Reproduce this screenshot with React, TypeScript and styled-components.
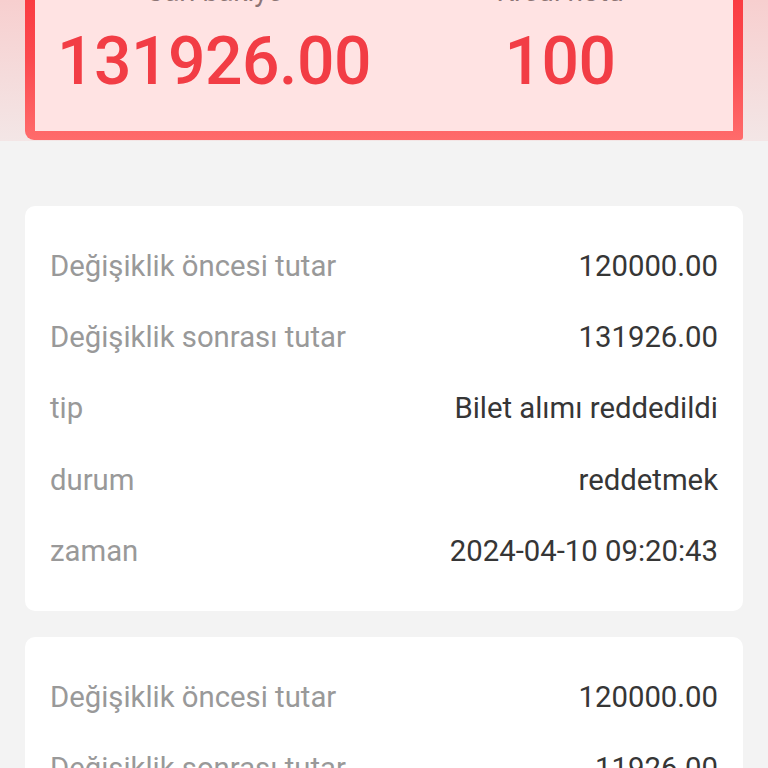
import React from "react"
import styled, { createGlobalStyle } from "styled-components"

const GlobalStyle = createGlobalStyle`
    * {
        box-sizing: border-box;
    }

    body {
        margin: 0;
        background: #f3f3f3;
        font-family: "Roboto", "Noto Sans", sans-serif;
        overflow: hidden;
    }
`

// the screenshot is taken scrolled down a little, this stands for the scroll offset
const Page = styled.div`
    margin-top: -78px;
    display: flex;
    flex-direction: column;
`

const Header = styled.header`
    padding: 20px 25px 1px;
    background: linear-gradient(180deg, #f9c2c2 0%, #f6d6d6 55%, #f3e6e6 100%);
`

const BalanceFrame = styled.div`
    padding: 10px 10px 9px;
    background: linear-gradient(180deg, #f92e35 0%, #fb4a4f 60%, #ff6b6b 100%);
    border-bottom-left-radius: 9px;
    border-bottom-right-radius: 3px;
`

const BalanceInner = styled.div`
    display: grid;
    grid-template-columns: 1fr 1fr;
    padding: 20px 0 29px 6px;
    background: #ffe3e3;
`

const BalanceCol = styled.div`
    display: flex;
    flex-direction: column;
    align-items: center;
`

const BalanceLabel = styled.span`
    font-size: 28px;
    line-height: 40px;
    color: #8d7575;
`

const BalanceValue = styled.span`
    margin-top: 10px;
    font-size: 66px;
    line-height: 80px;
    font-weight: 500;
    color: #f23d45;
    letter-spacing: -0.5px;
`

const List = styled.main`
    display: flex;
    flex-direction: column;
    gap: 26px;
    padding: 65px 25px 40px;
`

const Card = styled.section`
    display: flex;
    flex-direction: column;
    padding: 24px 25px 25px;
    background: #ffffff;
    border-radius: 10px;
`

const Row = styled.div`
    display: flex;
    align-items: center;
    justify-content: space-between;
    height: 71.3px;
    font-size: 29.3px;
`

const Label = styled.span`
    color: #999999;
`

const Value = styled.span`
    color: #363636;
`

interface IRecord {
    before: string
    after: string
    type: string
    status: string
    time: string
}

const records: IRecord[] = [
    {
        before: "120000.00",
        after: "131926.00",
        type: "Bilet alımı reddedildi",
        status: "reddetmek",
        time: "2024-04-10 09:20:43",
    },
    {
        before: "120000.00",
        after: "11926.00",
        type: "Bilet alımı",
        status: "başarılı",
        time: "2024-04-10 09:18:12",
    },
]

const RecordCard = ({ record }: { record: IRecord }) => (
    <Card>
        <Row>
            <Label>Değişiklik öncesi tutar</Label>
            <Value>{record.before}</Value>
        </Row>
        <Row>
            <Label>Değişiklik sonrası tutar</Label>
            <Value>{record.after}</Value>
        </Row>
        <Row>
            <Label>tip</Label>
            <Value>{record.type}</Value>
        </Row>
        <Row>
            <Label>durum</Label>
            <Value>{record.status}</Value>
        </Row>
        <Row>
            <Label>zaman</Label>
            <Value>{record.time}</Value>
        </Row>
    </Card>
)

export default function App() {
    return (
        <>
            <GlobalStyle />
            <Page>
                <Header>
                    <BalanceFrame>
                        <BalanceInner>
                            <BalanceCol>
                                <BalanceLabel>Cari bakiye</BalanceLabel>
                                <BalanceValue>131926.00</BalanceValue>
                            </BalanceCol>
                            <BalanceCol>
                                <BalanceLabel>Kredi notu</BalanceLabel>
                                <BalanceValue>100</BalanceValue>
                            </BalanceCol>
                        </BalanceInner>
                    </BalanceFrame>
                </Header>
                <List>
                    {records.map((r, i) => (
                        <RecordCard key={i} record={r} />
                    ))}
                </List>
            </Page>
        </>
    )
}
